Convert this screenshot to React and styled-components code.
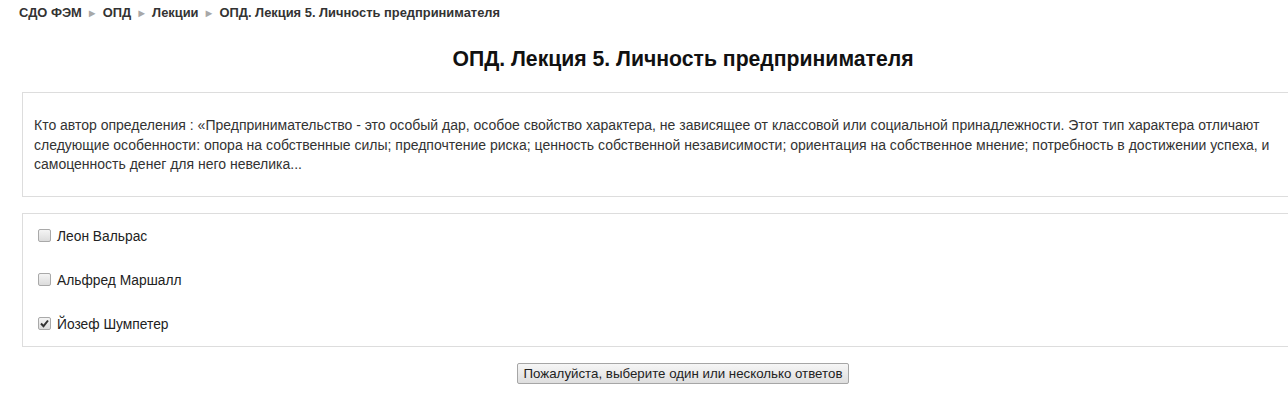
import React from "react";
import styled, { createGlobalStyle } from "styled-components";

const Global = createGlobalStyle`
  html, body { margin: 0; padding: 0; background: #fff; overflow: hidden; }
  body { font-family: "Liberation Sans", Arial, sans-serif; color: #333; font-size: 13px; }
`;

const Page = styled.div`
  width: 1288px;
  height: 412px;
  overflow: hidden;
`;

const Breadcrumb = styled.nav`
  display: flex;
  align-items: center;
  gap: 5px;
  padding: 4px 0 0 19px;
  height: 17px;
  font-size: 12.9px;
  font-weight: bold;
  color: #333;
  white-space: nowrap;
`;

const Sep = styled.span`
  color: #a8a8a8;
  font-size: 11px;
`;

const Content = styled.div`
  width: 1322px;
  margin-left: 22px;
  display: flex;
  flex-direction: column;
`;

const Title = styled.h2`
  margin: 0;
  padding-top: 26px;
  text-align: center;
  font-size: 21.2px;
  font-weight: bold;
  color: #111;
  line-height: 24px;
  box-sizing: border-box;
  height: 71px;
`;

const Box = styled.div`
  border: 1px solid #ddd;
  box-sizing: border-box;
`;

const QuestionBox = styled(Box)`
  padding: 23px 12px 22px 11px;
  font-size: 14px;
  line-height: 19.5px;
  color: #333;
  height: 105px;
`;

const AnswersBox = styled(Box)`
  margin-top: 16px;
  display: flex;
  flex-direction: column;
`;

const AnswerRow = styled.label`
  display: flex;
  align-items: center;
  height: 44px;
  padding-left: 15px;
  gap: 6px;
  font-size: 13.8px;
  color: #222;
`;

const Check = styled.span`
  width: 11px;
  height: 11px;
  border: 1px solid #a9a9a9;
  border-radius: 2px;
  background: linear-gradient(#f4f4f4, #dcdcdc);
  display: flex;
  align-items: center;
  justify-content: center;
  margin-top: -1px;
`;

const ButtonRow = styled.div`
  display: flex;
  justify-content: center;
  margin-top: 16px;
`;

const Button = styled.button`
  font-family: "Liberation Sans", Arial, sans-serif;
  font-size: 13.3px;
  color: #222;
  height: 21px;
  padding: 0 6px;
  border: 1px solid #a6a6a6;
  border-radius: 2px;
  background: linear-gradient(#f6f6f6, #dedede);
  line-height: 19px;
`;

const answers = [
  { text: "Леон Вальрас", checked: false },
  { text: "Альфред Маршалл", checked: false },
  { text: "Йозеф Шумпетер", checked: true },
];

export default function App() {
  const crumbs = ["СДО ФЭМ", "ОПД", "Лекции", "ОПД. Лекция 5. Личность предпринимателя"];
  return (
    <Page>
      <Global />
      <Breadcrumb>
        {crumbs.map((c, i) => (
          <React.Fragment key={c}>
            {i > 0 && <Sep>►</Sep>}
            <span>{c}</span>
          </React.Fragment>
        ))}
      </Breadcrumb>
      <Content>
        <Title>ОПД. Лекция 5. Личность предпринимателя</Title>
        <QuestionBox>
          Кто автор определения : «Предпринимательство - это особый дар, особое свойство характера, не зависящее от классовой или социальной принадлежности. Этот тип характера отличают следующие особенности: опора на собственные силы; предпочтение риска; ценность собственной независимости; ориентация на собственное мнение; потребность в достижении успеха, и самоценность денег для него невелика...
        </QuestionBox>
        <AnswersBox>
          {answers.map((a) => (
            <AnswerRow key={a.text}>
              <Check>
                {a.checked && (
                  <svg width="9" height="9" viewBox="0 0 9 9">
                    <path d="M1 4.5 L3.5 7.2 L8 1.5" stroke="#333" strokeWidth="2" fill="none" />
                  </svg>
                )}
              </Check>
              <span>{a.text}</span>
            </AnswerRow>
          ))}
        </AnswersBox>
        <ButtonRow>
          <Button>Пожалуйста, выберите один или несколько ответов</Button>
        </ButtonRow>
      </Content>
    </Page>
  );
}
